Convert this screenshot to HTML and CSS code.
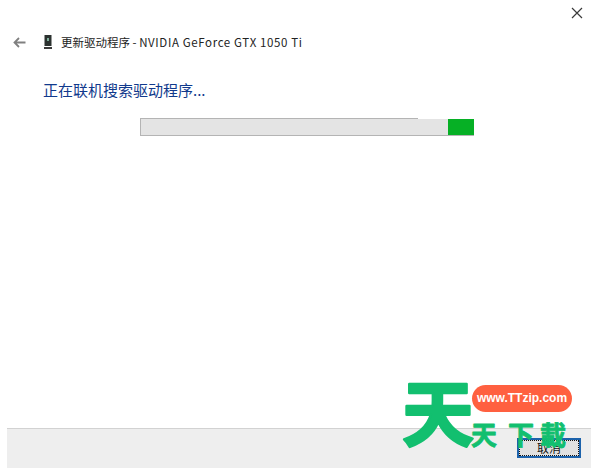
FILE: index.html
```html
<!DOCTYPE html>
<html lang="zh-CN">
<head>
    <meta charset="UTF-8">
    <meta name="viewport" content="width=device-width, initial-scale=1.0">
    <title>更新驱动程序</title>
    <link rel="stylesheet" href="styles.css">
</head>
<body>
    <div class="dialog">
        <div class="close-row">
            <svg class="close-icon" width="12" height="12" viewBox="0 0 12 12">
                <path d="M1 1 L11 11 M11 1 L1 11" stroke="#3a3a3a" stroke-width="1.2" fill="none"/>
            </svg>
        </div>

        <!-- Barra de título -->
        <div class="title-row">
            <svg class="back-icon" width="13" height="11" viewBox="0 0 13 11">
                <path d="M12.5 5.5 H1.5 M6 1 L1.5 5.5 L6 10" stroke="#808080" stroke-width="1.8" fill="none"/>
            </svg>
            <svg class="gpu-icon" width="8" height="14" viewBox="0 0 8 14">
                <rect x="0.5" y="0" width="7" height="11" fill="#2c3230"/>
                <rect x="3" y="3" width="2" height="3" fill="#7fae9a"/>
                <rect x="0" y="12" width="8" height="2" fill="#3a3a3a"/>
            </svg>
            <span class="title-text">更新驱动程序 - <span class="title-device">NVIDIA GeForce GTX 1050 Ti</span></span>
        </div>

        <h1 class="heading">正在联机搜索驱动程序...</h1>

        <div class="progress">
            <div class="progress-edge"></div>
            <div class="progress-track">
                <div class="progress-bar"></div>
            </div>
        </div>

        <div class="footer">
            <button class="cancel">取消</button>
        </div>
    </div>

    <!-- Marca de agua -->
    <div class="watermark">
        <svg class="wm-logo" width="180" height="90" viewBox="0 0 180 90">
            <text class="wm-big" x="2" y="70">天</text>
            <text class="wm-small" x="71" y="75">天</text>
            <text class="wm-small" x="108" y="75">下</text>
            <text class="wm-small" x="140" y="75">載</text>
        </svg>
        <span class="wm-pill">www.TTzip.com</span>
    </div>
</body>
</html>
```

FILE: styles.css
```css
body {
    font-family: "Noto Sans CJK SC", "Noto Sans", sans-serif;
    background-color: #fff;
    margin: 0;
}

.dialog {
    height: 470px;
    display: flex;
    flex-direction: column;
    overflow: hidden;
}

.close-row {
    display: flex;
    justify-content: flex-end;
    padding: 7px 8px 0 0;
    height: 21px;
}

.title-row {
    display: flex;
    align-items: center;
    height: 16px;
    margin-top: 6px;
    padding-left: 13px;
    color: #222;
}

.gpu-icon {
    margin-left: 18px;
}

.title-text {
    margin-left: 9px;
    font-size: 11.5px;
    line-height: 16px;
    white-space: nowrap;
}

.title-device {
    letter-spacing: 0.63px;
}

.heading {
    margin: 29px 0 0 43px;
    font-size: 15px;
    line-height: 22px;
    font-weight: 400;
    color: #10398c;
}

.progress {
    width: 334px;
    margin: 17px 0 0 140px;
}

.progress-edge {
    width: 278px;
    height: 1px;
    background: #b4b4b4;
}

.progress-track {
    height: 16px;
    display: flex;
    justify-content: flex-end;
    background: #e4e4e4;
    border-left: 1px solid #b4b4b4;
    border-bottom: 1px solid #b4b4b4;
}

.progress-bar {
    width: 26px;
    background: #06b025;
}

.footer {
    margin: auto 0 2px 7px;
    height: 40px;
    background: #eeeeee;
    border-top: 1px solid #d2d2d2;
    display: flex;
    justify-content: flex-end;
    align-items: flex-start;
    padding: 9px 10px 0 0;
    box-sizing: border-box;
}

.cancel {
    width: 64px;
    height: 20px;
    padding: 0;
    font-family: inherit;
    font-size: 12px;
    line-height: 14px;
    color: #111;
    background: #e1e1e1;
    border: 2px solid #1c62ab;
    outline: 1px dotted #111;
    outline-offset: -3px;
}

.watermark {
    position: absolute;
    left: 400px;
    top: 370px;
    width: 180px;
    height: 90px;
}

.wm-logo {
    display: block;
    overflow: visible;
}

.wm-big,
.wm-small {
    fill: #12bf6f;
    stroke: #12bf6f;
    stroke-linejoin: round;
    font-weight: 700;
}

.wm-big {
    font-size: 72px;
    stroke-width: 2.5px;
}

.wm-small {
    font-size: 26px;
    stroke-width: 0.8px;
}

.wm-pill {
    position: absolute;
    left: 72px;
    top: 15px;
    width: 100px;
    height: 27px;
    border-radius: 14px;
    background: #ff6040;
    color: #fff;
    font-family: "Liberation Sans", sans-serif;
    font-size: 12px;
    font-weight: 700;
    line-height: 27px;
    text-align: center;
}
```
